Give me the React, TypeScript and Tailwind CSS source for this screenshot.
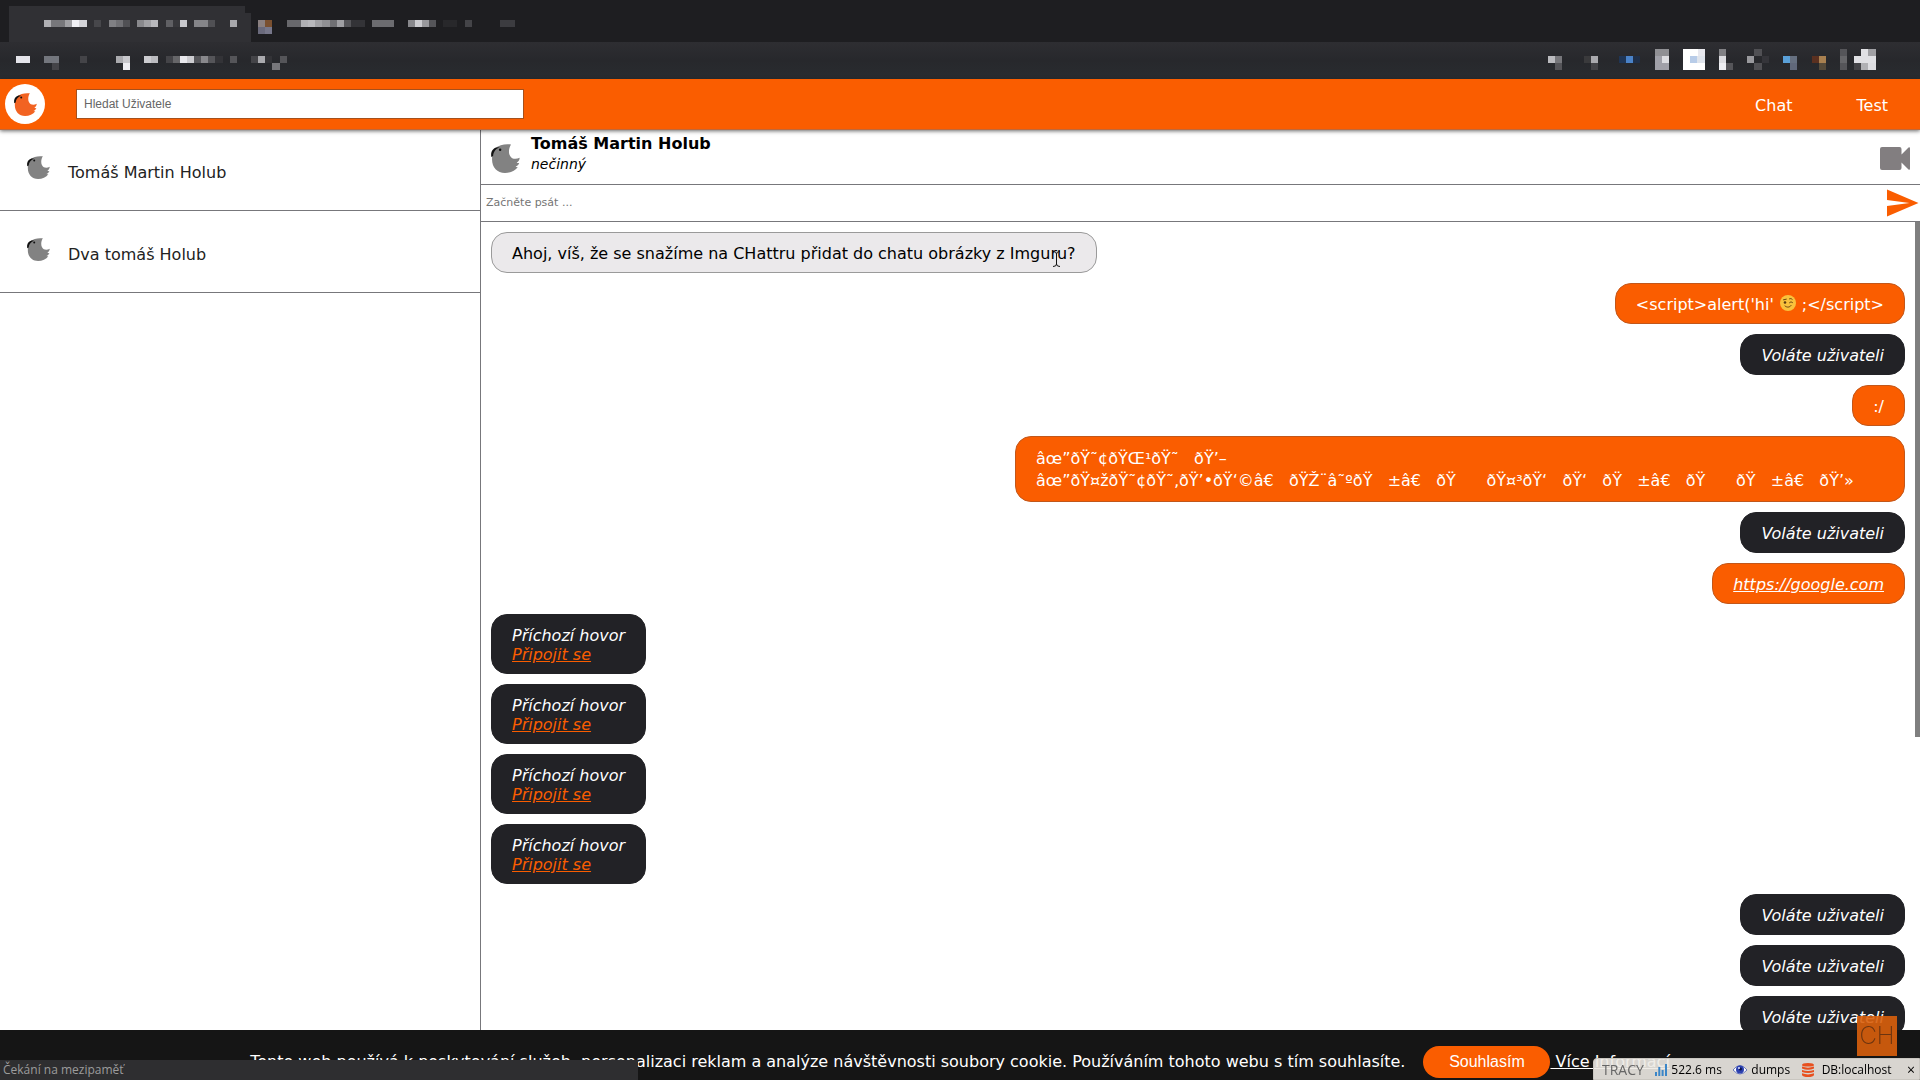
import type { ReactNode } from 'react'
import { MdSend } from 'react-icons/md'

type Cell = [x: number, y: number, w: number, fill: string]

// blurred browser chrome, 7px blocks
const tabCells: Cell[] = [
  [44, 20, 7, '#b0b0b4'], [51, 20, 14, '#77777b'], [65, 20, 7, '#a0a0a4'], [72, 20, 7, '#f0f0f4'], [79, 20, 8, '#d4d4d8'],
  [94, 20, 7, '#47474b'], [109, 20, 7, '#808084'], [116, 20, 7, '#707074'], [123, 20, 7, '#505054'],
  [137, 20, 7, '#88888c'], [144, 20, 7, '#a0a0a4'], [151, 20, 7, '#b8b8bc'], [166, 20, 7, '#606064'], [173, 20, 7, '#38383c'],
  [180, 20, 7, '#c8c8cc'], [194, 20, 14, '#858589'], [208, 20, 7, '#505054'], [230, 20, 7, '#a8a8ac'],
  [258, 20, 7, '#8a8080'], [265, 20, 7, '#7a5030'], [258, 27, 7, '#6a6a7c'], [265, 27, 7, '#77778a'],
  [287, 20, 14, '#68686c'], [301, 20, 7, '#b0b0b4'], [308, 20, 7, '#b8b8bc'], [315, 20, 7, '#a0a0a4'], [322, 20, 8, '#909094'],
  [330, 20, 7, '#707074'], [337, 20, 7, '#a0a0a4'], [344, 20, 7, '#555559'], [351, 20, 14, '#333337'],
  [372, 20, 22, '#6c6c70'], [408, 20, 7, '#88888c'], [415, 20, 7, '#ccccd0'], [422, 20, 7, '#99999d'], [429, 20, 7, '#555559'],
  [443, 20, 14, '#28282b'], [465, 20, 7, '#444448'], [500, 20, 15, '#3c3c40'],
]

const toolCells: Cell[] = [
  [16, 14, 14, '#e4e4ea'], [44, 14, 15, '#73767d'], [52, 21, 7, '#444448'], [80, 14, 7, '#444448'],
  [116, 14, 7, '#aaaaae'], [123, 14, 7, '#c8c8cc'], [123, 21, 7, '#eeeef2'], [144, 14, 7, '#ccccd0'], [151, 14, 7, '#bbbbbf'],
  [166, 14, 7, '#444448'], [173, 14, 7, '#666669'], [180, 14, 7, '#e8e8ec'], [187, 14, 7, '#ccccd0'], [194, 14, 7, '#555559'],
  [201, 14, 7, '#88888c'], [208, 14, 7, '#555559'], [215, 14, 8, '#333337'], [230, 14, 7, '#555559'], [251, 14, 7, '#444448'],
  [258, 14, 7, '#aaaaae'], [265, 14, 7, '#333337'], [280, 14, 7, '#555559'], [272, 21, 8, '#77777b'],
]

const extensionCells: Cell[] = [
  [28, 14, 7, '#bbbbbf'], [35, 14, 7, '#77777b'], [35, 21, 7, '#555559'],
  [64, 14, 7, '#3a3a3c'], [71, 14, 7, '#aaaaae'], [71, 21, 7, '#444448'],
  [99, 14, 7, '#1f3555'], [106, 14, 7, '#4a82c8'], [113, 14, 7, '#1f2f48'],
  [135, 7, 14, '#909094'], [135, 14, 7, '#a0a0a8'], [142, 14, 7, '#dddde1'], [135, 21, 14, '#a0a0a8'],
  [163, 7, 22, '#ffffff'], [163, 14, 22, '#ffffff'], [163, 21, 22, '#ffffff'], [178, 7, 7, '#e8e8ee'], [170, 14, 7, '#b8cce8'], [177, 14, 8, '#dfe4ec'],
  [199, 7, 7, '#808084'], [199, 14, 7, '#dddde1'], [199, 21, 7, '#eeeef2'], [206, 21, 7, '#555559'],
  [227, 14, 7, '#99999d'], [234, 7, 8, '#505054'], [234, 21, 8, '#505054'], [242, 14, 7, '#35353a'],
  [263, 14, 7, '#5aa0d8'], [270, 14, 7, '#667080'], [270, 21, 7, '#60687a'],
  [292, 14, 7, '#5a3020'], [299, 14, 7, '#a88050'], [299, 21, 7, '#554a3a'],
  [320, 7, 7, '#555559'], [320, 14, 7, '#666669'], [320, 21, 7, '#555559'],
  [341, 7, 7, '#e0e0e4'], [348, 7, 8, '#a0a0a4'], [334, 14, 22, '#e0e0e4'], [334, 21, 7, '#444448'], [341, 21, 7, '#b0b0b4'], [348, 21, 8, '#dddde1'],
]

function Blocks({ cells, width, height }: { cells: Cell[]; width: number; height: number }) {
  return (
    <svg width={width} height={height} shapeRendering="crispEdges" aria-hidden="true" className="shrink-0">
      {cells.map(([x, y, w, fill]) => (
        <rect key={`${x}-${y}`} x={x} y={y} width={w} height={7} fill={fill} />
      ))}
    </svg>
  )
}

function BrowserChrome() {
  return (
    <div className="shrink-0">
      <div className="h-[42px] bg-[#1e1e21]">
        <svg width="522" height="42" shapeRendering="crispEdges" aria-hidden="true">
          <path d="M9 42V6H245V13H251V42Z" fill="#303034" />
          {tabCells.map(([x, y, w, fill]) => (
            <rect key={`${x}-${y}`} x={x} y={y} width={w} height={7} fill={fill} />
          ))}
        </svg>
      </div>
      <div className="h-[37px] flex justify-between bg-linear-to-b from-[#2e2e32] via-[#27282c] to-[#292c30]">
        <Blocks cells={toolCells} width={300} height={37} />
        <Blocks cells={extensionCells} width={400} height={37} />
      </div>
    </div>
  )
}

function Bird({ className }: { className: string }) {
  return (
    <svg viewBox="0 0 28 28" className={className} aria-hidden="true">
      <path
        d="M4 4C8 1 13-.3 19.3.4C17 4 16.700 9 18.500 11.500C20 14.500 24 15 27.700 13.200C27.500 15.500 26.500 17 24.800 18C25.700 18.500 26.500 18.500 27.200 18.300C26.700 20 25.500 21.300 23.700 21.800C24.400 22.300 25.200 22.400 26 22.300C23.500 26 18.500 28 13.500 28C6 28 1 22.500 1 15C1 10.500 1.500 7 4 4Z"
        fill="currentColor"
      />
      <path d="M.3 12.500C-.8 6.500 3 2.200 8.500 3.200C5 4.500 2.500 7 2 11.500Z" fill="#111" />
      <circle cx="8.800" cy="5.600" r="1.200" fill="#111" />
    </svg>
  )
}

function Wink() {
  return (
    <svg viewBox="0 0 16 16" className="inline-block w-4 h-4 mx-1.5 align-[-1px]" role="img" aria-label="wink">
      <circle cx="8" cy="8" r="8" fill="#f9c23c" />
      <circle cx="5" cy="7.500" r="1.300" fill="#5a3a10" />
      <path d="M9.500 7.700C10.300 6.700 11.700 6.700 12.500 7.500M3.500 4.800L6.300 4.200M9.500 3.800C10.500 3.300 11.500 3.600 12.200 4.300M5 11C7 12.700 9.500 12.500 11 10.600" fill="none" stroke="#6b4512" strokeLinecap="round" />
    </svg>
  )
}

const bubbleStyles = {
  theirs: 'self-start bg-[#ebe9eb] border-[#9a9a9a] text-black',
  mine: 'self-end bg-[#fa5d00] border-[#c2571a] text-white',
  callOut: 'self-end bg-[#222226] border-[#222226] text-white italic',
  callIn: 'self-start bg-[#222226] border-[#222226] text-white italic',
}

function Bubble({ kind, className = '', children }: { kind: keyof typeof bubbleStyles; className?: string; children: ReactNode }) {
  return (
    <li className={`shrink-0 max-w-full rounded-2xl border px-5 pt-[11px] pb-[9px] leading-[19px] ${bubbleStyles[kind]} ${className}`}>
      {children}
    </li>
  )
}

function OutgoingCall() {
  return <Bubble kind="callOut">Voláte uživateli</Bubble>
}

function IncomingCall() {
  return (
    <Bubble kind="callIn">
      Příchozí hovor
      <br />
      <a href="#join" className="text-[#fa5d00] underline">Připojit se</a>
    </Bubble>
  )
}

const users = ['Tomáš Martin Holub', 'Dva tomáš Holub']

const garbled = [
  'âœ”ðŸ˜¢ðŸŒ¹ðŸ˜   ðŸ’–',
  'âœ”ðŸ¤žðŸ˜¢ðŸ˜‚ðŸ’•ðŸ‘©â€   ðŸŽ¨â˜ºðŸ   ±â€   ðŸ      ðŸ¤³ðŸ‘   ðŸ‘   ðŸ   ±â€   ðŸ      ðŸ   ±â€   ðŸ’»   ',
]

function Header() {
  return (
    <header className="relative z-10 h-[50px] shrink-0 flex items-center justify-between bg-[#fa5d00] pl-[5px] pr-8 shadow-[0_1px_0_#c0683a,0_2px_4px_rgba(0,0,0,0.6)]">
      <div className="flex items-center gap-[31px]">
        <a href="#home" aria-label="CHattr" className="w-10 h-10 rounded-full bg-white grid place-items-center text-[#f26322]">
          <Bird className="w-[23px] h-[23px]" />
        </a>
        <input
          aria-label="Hledat Uživatele"
          placeholder="Hledat Uživatele"
          className="w-[448px] h-[30px] bg-white border border-[#a5501c] px-[7px] text-xs font-['Liberation_Sans',sans-serif] placeholder:text-[#666] outline-none"
        />
      </div>
      <nav className="flex gap-16 pt-[3px] text-white">
        <a href="#chat">Chat</a>
        <a href="#test">Test</a>
      </nav>
    </header>
  )
}

function Conversation() {
  return (
    <section className="relative flex-1 min-w-0 flex flex-col">
      <div className="h-14 shrink-0 flex items-center justify-between border-b border-[#77777b] px-2.5 pt-[3px]">
        <div className="flex items-center gap-[11px]">
          <Bird className="w-[29px] h-[29px] text-[#828282]" />
          <div className="pb-2">
            <h1 className="font-bold leading-5">Tomáš Martin Holub</h1>
            <p className="text-sm leading-5 italic">nečinný</p>
          </div>
        </div>
        <button aria-label="Video" className="text-[#827e80]">
          <svg viewBox="0 0 30 23" className="w-[30px] h-[23px]" fill="currentColor">
            <path d="M2 0H19.500Q21.500 0 21.500 2V7.500L28.500 .5Q30-.5 30 1.500V21.500Q30 23.500 28.500 22.500L21.500 15.500V21Q21.500 23 19.500 23H2Q0 23 0 21V2Q0 0 2 0Z" />
          </svg>
        </button>
      </div>
      <div className="h-[37px] shrink-0 flex items-center border-b border-[#77777b]">
        <input
          aria-label="Začněte psát"
          placeholder="Začněte psát ..."
          className="flex-1 h-full px-[5px] pb-0.5 text-[11px] placeholder:text-[#757575] outline-none"
        />
        <button aria-label="Odeslat" className="text-[#fa5d00]">
          <MdSend className="w-9 h-9" />
        </button>
      </div>
      <div className="relative flex-1 min-h-0 overflow-hidden">
        <ul className="flex flex-col gap-2.5 pt-2.5 pl-2.5 pr-[15px]">
          <Bubble kind="theirs">Ahoj, víš, že se snažíme na CHattru přidat do chatu obrázky z Imguru?</Bubble>
          <Bubble kind="mine">
            {"<script>alert('hi'"}
            <Wink />
            {';</script>'}
          </Bubble>
          <OutgoingCall />
          <Bubble kind="mine">:/</Bubble>
          <Bubble kind="mine" className="w-[890px]">
            {garbled.map((line) => (
              <p key={line} className="whitespace-pre leading-[22px]">{line}</p>
            ))}
          </Bubble>
          <OutgoingCall />
          <Bubble kind="mine">
            <a href="https://google.com" className="italic underline">https://google.com</a>
          </Bubble>
          <IncomingCall />
          <IncomingCall />
          <IncomingCall />
          <IncomingCall />
          <OutgoingCall />
          <OutgoingCall />
          <OutgoingCall />
        </ul>
        <div className="absolute top-0 right-0 w-[5px] h-[60%] bg-[#7f7f7f]" />
        <svg viewBox="0 0 9 16" className="absolute left-[571px] top-[29px] w-[9px] h-4" fill="none" stroke="#111" aria-hidden="true">
          <path d="M1 .5Q4.500 .5 4.500 3V13Q4.500 15.500 1 15.500M8 .5Q4.500 .5 4.500 3M4.500 13Q4.500 15.500 8 15.500" />
        </svg>
      </div>
    </section>
  )
}

function CookieBar() {
  return (
    <div className="fixed inset-x-0 bottom-0 h-[50px] bg-[#151515] text-white flex items-center justify-center whitespace-nowrap pt-3.5">
      <p>
        Tento web používá k poskytování služeb, personalizaci reklam a analýze návštěvnosti soubory cookie. Používáním tohoto webu s tím souhlasíte.
      </p>
      <button className="ml-[18px] w-[127px] h-8 rounded-full bg-[#fa5d00] font-['Liberation_Sans',sans-serif]">Souhlasím</button>
      <a href="#info" className="underline whitespace-pre"> Více Informací</a>
    </div>
  )
}

function TracyBar() {
  return (
    <div className="fixed right-0 bottom-0 h-[22px] w-[327px] flex items-center justify-between rounded-tl border border-[#c9c6c0] bg-[#edeae4]/90 pl-2 pr-0 pt-0.5 text-xs text-black font-['Open_Sans',sans-serif] whitespace-nowrap">
      <span className="text-sm font-medium text-[#666]">TRACY</span>
      <span className="flex items-center gap-1">
        <svg viewBox="0 0 12 12" className="w-3 h-3" fill="#3b86c8">
          <path d="M0 8H2V12H0ZM3.300 3H5.300V12H3.300ZM6.600 6H8.600V12H6.600ZM10 0H12V12H10Z" />
        </svg>
        522.6 ms
      </span>
      <span className="flex items-center gap-1">
        <svg viewBox="0 0 14 12" className="w-3.5 h-3">
          <path d="M0 6Q7-3 14 6Q7 14 0 6Z" fill="#fff" stroke="#6a78b8" />
          <circle cx="7" cy="5.500" r="4" fill="#2c41b0" />
          <circle cx="7.500" cy="5" r="1.500" fill="#0a1248" />
          <circle cx="6" cy="4" r="1" fill="#dfe5ff" />
        </svg>
        dumps
      </span>
      <span className="flex items-center gap-2">
        <svg viewBox="0 0 12 14" className="w-3 h-3.5" fill="#e8501e">
          <path d="M0 2Q0 0 6 0T12 2Q12 3.500 6 3.500T0 2ZM0 3.600Q6 5.800 12 3.600V5.500Q6 8 0 5.500ZM0 7Q6 9.200 12 7V9Q6 11.200 0 9ZM0 10.300Q6 12.600 12 10.300V12Q11 14 6 14T0 12Z" />
        </svg>
        DB:localhost
      </span>
      <button aria-label="Zavřít" className="px-1 text-sm leading-4">×</button>
    </div>
  )
}

export default function App() {
  return (
    <div className="h-screen flex flex-col overflow-hidden bg-white text-base text-black font-['Verdana','DejaVu_Sans',sans-serif]">
      <BrowserChrome />
      <Header />
      <main className="flex-1 min-h-0 flex">
        <aside className="w-1/4 shrink-0">
          <ul>
            {users.map((name) => (
              <li key={name} className="h-[82px] border-b border-[#77777b]">
                <a href="#user" className="h-full flex items-center gap-[18px] pl-[27px] text-[#222]">
                  <Bird className="w-[23px] h-[23px] mb-1 text-[#828282]" />
                  <span className="pt-1.5">{name}</span>
                </a>
              </li>
            ))}
          </ul>
        </aside>
        <div className="w-px shrink-0 bg-[#77777b]" />
        <Conversation />
      </main>
      <CookieBar />
      <div className="fixed bottom-0 left-0 w-[638px] h-5 bg-[#2e2e30] pl-[3px] text-xs leading-5 text-[#9c9c9c] font-['Open_Sans',sans-serif]">
        Čekání na mezipaměť
      </div>
      <TracyBar />
      <div className="fixed right-[23px] bottom-6 w-10 h-10 grid place-items-center bg-[#d95f0c]/90">
        <span className="text-2xl font-extralight text-[#6b3410] font-['Inter',sans-serif]">CH</span>
      </div>
    </div>
  )
}
